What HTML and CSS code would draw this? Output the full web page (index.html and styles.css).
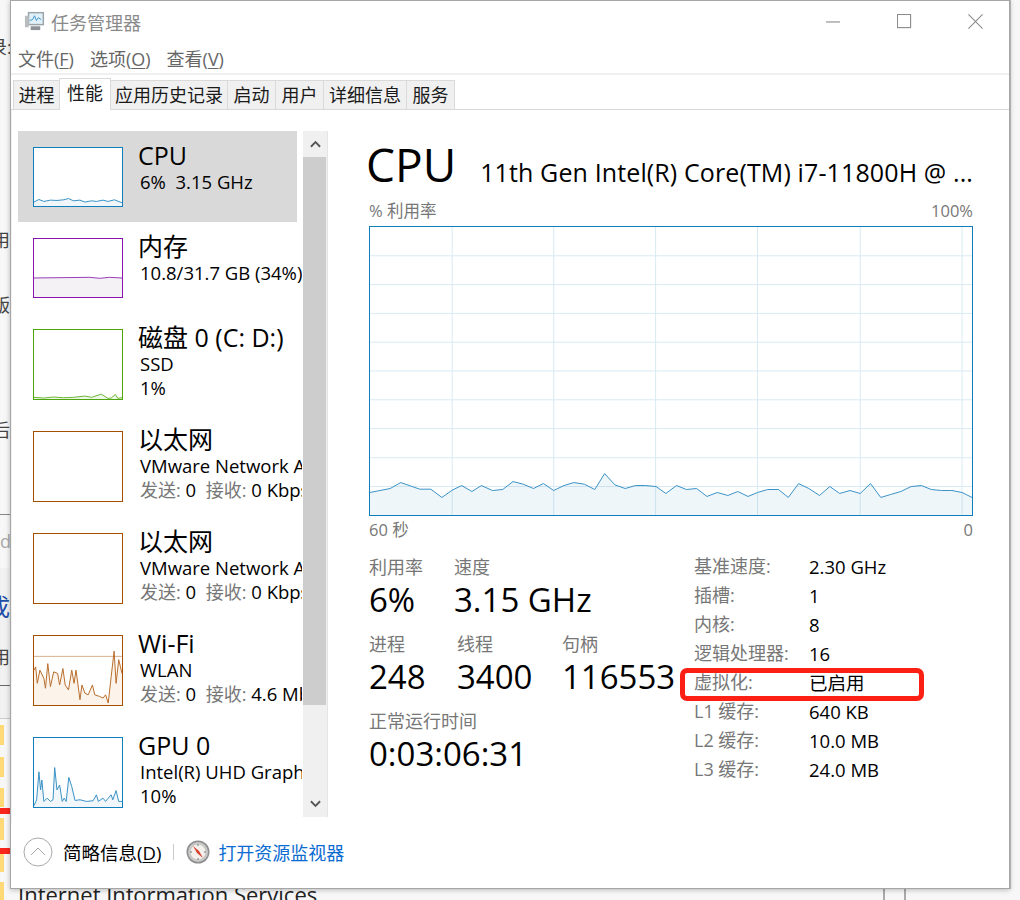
FILE: index.html
```html
<!DOCTYPE html>
<html lang="zh-CN">
<head>
<meta charset="utf-8">
<title>任务管理器</title>
<link rel="stylesheet" href="styles.css">
</head>
<body>
<div class="desktop">
  <span class="bg-frag frag-a">录:</span>
  <span class="bg-frag frag-b">用</span>
  <span class="bg-frag frag-c">版</span>
  <span class="bg-frag frag-d">后</span>
  <span class="bg-rule rule-a"></span>
  <span class="bg-frag frag-e">do</span>
  <span class="bg-band"></span>
  <span class="bg-frag frag-f">成</span>
  <span class="bg-frag frag-g">用</span>
  <span class="bg-rule rule-b"></span>
  <span class="bg-rule rule-c"></span>
  <span class="folder f1"></span><span class="folder f2"></span><span class="folder f3"></span>
  <span class="folder f4"></span><span class="folder f5"></span><span class="folder f6"></span>
  <span class="red-bar r1"></span><span class="red-bar r2"></span>
  <span class="bg-under">Internet Information Services</span>
  <span class="bg-vline v1"></span><span class="bg-vline v2"></span>

  <div class="window">
    <header class="titlebar">
      <svg class="app-icon" viewBox="0 0 22 22" aria-hidden="true">
        <rect x="4" y="1" width="17" height="14" fill="#9aa3a8"/>
        <rect x="5.500" y="2.500" width="14" height="11" fill="#dff0f8"/>
        <path d="M6 10l3-1 2-4 2 5 2-3 3 2" fill="none" stroke="#3d93c9" stroke-width="1"/>
        <rect x="1" y="5" width="4" height="12" fill="#b9bdc0"/>
        <rect x="7" y="16" width="10" height="4" fill="#8c9296"/>
      </svg>
      <span class="app-title">任务管理器</span>
      <div class="win-buttons">
        <svg class="win-btn" viewBox="0 0 16 16" aria-hidden="true"><path d="M0 8.500h15"/></svg>
        <svg class="win-btn" viewBox="0 0 16 16" aria-hidden="true"><rect x=".5" y=".5" width="14" height="14"/></svg>
        <svg class="win-btn" viewBox="0 0 16 16" aria-hidden="true"><path d="M.5.5l15 15M15.500.5l-15 15"/></svg>
      </div>
    </header>
    <nav class="menubar">
      <span>文件(<u>F</u>)</span><span>选项(<u>O</u>)</span><span>查看(<u>V</u>)</span>
    </nav>
    <div class="tabs">
      <span class="tab t-proc">进程</span>
      <span class="tab tab-on">性能</span>
      <span class="tab t-hist">应用历史记录</span>
      <span class="tab t-start">启动</span>
      <span class="tab t-user">用户</span>
      <span class="tab t-det">详细信息</span>
      <span class="tab t-svc">服务</span>
    </div>
    <div class="content">
      <aside class="sidebar">
        <div class="list">
          <div class="item item-s item-on">
            <svg class="thumb thumb-s cpu" viewBox="100 442 268 178" preserveAspectRatio="none" aria-hidden="true">
              <path class="fill" d="M100 608L115 600 130 606 150 602 170 603 190 601 205 597 220 604 240 602 255 608 275 604 290 606 310 602 325 606 345 601 368 610V620H100Z"/>
              <path class="line" d="M100 608L115 600 130 606 150 602 170 603 190 601 205 597 220 604 240 602 255 608 275 604 290 606 310 602 325 606 345 601 368 610"/>
            </svg>
            <div class="info"><div class="name">CPU</div><div class="sub">6%&nbsp; 3.15 GHz</div></div>
          </div>
          <div class="item item-s">
            <svg class="thumb thumb-s mem" viewBox="100 55 268 177" preserveAspectRatio="none" aria-hidden="true">
              <path class="fill" d="M100 174L270 172 300 175 330 172 368 174V232H100Z"/>
              <path class="line" d="M100 174L270 172 300 175 330 172 368 174"/>
            </svg>
            <div class="info"><div class="name">内存</div><div class="sub">10.8/31.7 GB (34%)</div></div>
          </div>
          <div class="item">
            <svg class="thumb disk" viewBox="100 327 268 211" preserveAspectRatio="none" aria-hidden="true">
              <path class="fill" d="M100 533L130 535 160 532 190 534 220 533 255 529 275 533 305 523 325 536 335 535 348 524 355 536 368 534V538H100Z"/>
              <path class="line" d="M100 533L130 535 160 532 190 534 220 533 255 529 275 533 305 523 325 536 335 535 348 524 355 536 368 534"/>
            </svg>
            <div class="info"><div class="name">磁盘 0 (C: D:)</div><div class="sub">SSD</div><div class="sub">1%</div></div>
          </div>
          <div class="item">
            <svg class="thumb net" viewBox="0 0 90 71" aria-hidden="true"></svg>
            <div class="info"><div class="name">以太网</div><div class="sub">VMware Network Adapter</div><div class="sub"><span class="dim">发送:</span> 0&nbsp; <span class="dim">接收:</span> 0 Kbps</div></div>
          </div>
          <div class="item">
            <svg class="thumb net" viewBox="0 0 90 71" aria-hidden="true"></svg>
            <div class="info"><div class="name">以太网</div><div class="sub">VMware Network Adapter</div><div class="sub"><span class="dim">发送:</span> 0&nbsp; <span class="dim">接收:</span> 0 Kbps</div></div>
          </div>
          <div class="item">
            <svg class="thumb net" viewBox="100 46 268 210" preserveAspectRatio="none" aria-hidden="true">
              <path class="fill" d="M100 150L105 140 110 190 118 150 130 175 135 205 142 130 150 200 160 155 172 160 178 195 188 145 195 195 205 210 215 150 222 190 228 150 240 240 246 195 255 220 265 225 278 195 285 225 300 230 310 235 318 225 326 250 335 170 344 92 350 190 358 118 368 160V256H100Z"/>
              <path class="limit" d="M100 108H368"/>
              <path class="line" d="M100 150L105 140 110 190 118 150 130 175 135 205 142 130 150 200 160 155 172 160 178 195 188 145 195 195 205 210 215 150 222 190 228 150 240 240 246 195 255 220 265 225 278 195 285 225 300 230 310 235 318 225 326 250 335 170 344 92 350 190 358 118 368 160"/>
            </svg>
            <div class="info"><div class="name">Wi-Fi</div><div class="sub">WLAN</div><div class="sub"><span class="dim">发送:</span> 0&nbsp; <span class="dim">接收:</span> 4.6 Mbps</div></div>
          </div>
          <div class="item">
            <svg class="thumb cpu" viewBox="100 352 268 210" preserveAspectRatio="none" aria-hidden="true">
              <path class="fill" d="M100 558L108 540 115 455 120 510 124 480 130 545 140 535 150 545 158 540 163 442 170 510 178 495 186 545 192 535 198 545 206 472 215 500 225 542 240 540 260 545 280 543 290 525 296 545 310 535 318 545 326 535 335 525 340 540 350 512 358 545 368 545V562H100Z"/>
              <path class="line" d="M100 558L108 540 115 455 120 510 124 480 130 545 140 535 150 545 158 540 163 442 170 510 178 495 186 545 192 535 198 545 206 472 215 500 225 542 240 540 260 545 280 543 290 525 296 545 310 535 318 545 326 535 335 525 340 540 350 512 358 545 368 545"/>
            </svg>
            <div class="info"><div class="name">GPU 0</div><div class="sub">Intel(R) UHD Graphics</div><div class="sub">10%</div></div>
          </div>
        </div>
        <div class="scrollbar">
          <div class="sb-btn"><svg viewBox="0 0 12 8" aria-hidden="true"><path d="M1 7l5-5 5 5"/></svg></div>
          <div class="sb-thumb"></div>
          <div class="sb-track"></div>
          <div class="sb-btn"><svg viewBox="0 0 12 8" aria-hidden="true"><path d="M1 1l5 5 5-5"/></svg></div>
        </div>
      </aside>
      <main class="main">
        <div class="head">
          <h1 class="big">CPU</h1>
          <div class="model">11th Gen Intel(R) Core(TM) i7-11800H @ ...</div>
        </div>
        <div class="axis axis-top"><span>% 利用率</span><span>100%</span></div>
        <svg class="chart" viewBox="24 -642 1524 870" preserveAspectRatio="none" aria-hidden="true">
          <path class="grid" d="M232 -642V228M489 -642V228M747 -642V228M1005 -642V228M1265 -642V228M1523 -642V228M24 -555H1548M24 -468H1548M24 -381H1548M24 -294H1548M24 -207H1548M24 -120H1548M24 -33H1548M24 55H1548M24 142H1548"/>
          <path class="area" d="M24 160L75 148 102 130 150 150 178 150 206 175 232 153 256 139 282 157 306 139 334 154 360 151 386 127 412 135 438 148 463 133 489 154 515 139 540 130 567 135 593 151 618 103 644 137 670 148 696 139 722 139 748 142 773 163 800 139 825 151 851 148 877 172 903 160 930 169 955 157 981 172 1005 160 1031 151 1058 151 1083 175 1109 133 1135 148 1162 169 1188 142 1213 163 1239 154 1265 163 1291 133 1317 175 1342 166 1368 157 1394 142 1420 139 1445 151 1471 154 1497 154 1523 160 1548 175V228H24Z"/>
          <path class="trace" d="M24 160L75 148 102 130 150 150 178 150 206 175 232 153 256 139 282 157 306 139 334 154 360 151 386 127 412 135 438 148 463 133 489 154 515 139 540 130 567 135 593 151 618 103 644 137 670 148 696 139 722 139 748 142 773 163 800 139 825 151 851 148 877 172 903 160 930 169 955 157 981 172 1005 160 1031 151 1058 151 1083 175 1109 133 1135 148 1162 169 1188 142 1213 163 1239 154 1265 163 1291 133 1317 175 1342 166 1368 157 1394 142 1420 139 1445 151 1471 154 1497 154 1523 160 1548 175"/>
        </svg>
        <div class="axis axis-bottom"><span>60 秒</span><span>0</span></div>
        <div class="stats">
          <div class="live">
            <div class="live-row">
              <div class="stat s-usage"><div class="stat-label">利用率</div><div class="stat-value">6%</div></div>
              <div class="stat"><div class="stat-label">速度</div><div class="stat-value">3.15 GHz</div></div>
            </div>
            <div class="live-row">
              <div class="stat s-proc"><div class="stat-label">进程</div><div class="stat-value">248</div></div>
              <div class="stat s-thr"><div class="stat-label">线程</div><div class="stat-value">3400</div></div>
              <div class="stat"><div class="stat-label">句柄</div><div class="stat-value">116553</div></div>
            </div>
            <div class="live-row">
              <div class="stat"><div class="stat-label">正常运行时间</div><div class="stat-value">0:03:06:31</div></div>
            </div>
          </div>
          <dl class="specs">
            <div class="spec"><dt>基准速度:</dt><dd>2.30 GHz</dd></div>
            <div class="spec"><dt>插槽:</dt><dd>1</dd></div>
            <div class="spec"><dt>内核:</dt><dd>8</dd></div>
            <div class="spec"><dt>逻辑处理器:</dt><dd>16</dd></div>
            <div class="spec"><dt>虚拟化:</dt><dd>已启用</dd></div>
            <div class="spec"><dt>L1 缓存:</dt><dd>640 KB</dd></div>
            <div class="spec"><dt>L2 缓存:</dt><dd>10.0 MB</dd></div>
            <div class="spec"><dt>L3 缓存:</dt><dd>24.0 MB</dd></div>
          </dl>
        </div>
      </main>
    </div>
    <footer class="footer">
      <svg class="collapse" viewBox="0 0 30 30" aria-hidden="true"><circle cx="15" cy="15" r="14"/><path d="M8 18l7-7 7 7"/></svg>
      <span class="fewer">简略信息(<u>D</u>)</span>
      <span class="sep"></span>
      <svg class="gauge" viewBox="0 0 24 24" aria-hidden="true">
        <circle cx="12" cy="12" r="11.500" fill="#8e8e8e"/>
        <circle cx="12" cy="12" r="10" fill="#c9c9c9"/>
        <circle cx="12" cy="12" r="7.500" fill="#f4f1ec"/>
        <path d="M7 6l6 5 4 7-6-5z" fill="#d8402c"/>
        <path d="M12 4v2M12 18v2M4 12h2M18 12h2" stroke="#777" stroke-width="1"/>
      </svg>
      <span class="monitor-link">打开资源监视器</span>
    </footer>
  </div>
  <div class="mark-box"></div>
</div>
</body>
</html>
```
FILE: styles.css
```css
* { box-sizing: border-box; }
html, body { margin: 0; padding: 0; height: 100%; }
body {
  background: #fff;
  overflow: hidden;
  font-family: "Open Sans", "Noto Sans CJK SC", sans-serif;
  color: #000;
}
u { text-underline-offset: 2px; }

/* desktop: a free canvas behind the window */
.desktop { position: relative; width: 1020px; height: 900px; overflow: hidden; background: #f7f7f7; }
.bg-frag { position: absolute; left: 0; width: 10px; overflow: hidden; white-space: nowrap; font-size: 18px; line-height: 24px; color: #444; }
.frag-a { top: 35px; left: -11px; width: 21px; }
.frag-b { top: 228px; left: -8px; width: 18px; }
.frag-c { top: 293px; left: -8px; width: 18px; }
.frag-d { top: 418px; left: -8px; width: 18px; }
.frag-e { top: 529px; color: #aaa; }
.frag-f { top: 592px; left: -14px; width: 24px; font-size: 24px; line-height: 30px; color: #1f4fa8; }
.frag-g { top: 645px; left: -8px; width: 18px; }
.bg-rule { position: absolute; left: 0; width: 10px; height: 1px; background: #666; }
.rule-a { top: 514px; background: #888; }
.rule-b { top: 685px; }
.rule-c { top: 718px; background: #ccc; }
.bg-band { position: absolute; left: 0; top: 568px; width: 10px; height: 150px; background: #f1f1f1; }
.folder { position: absolute; left: 0; width: 4px; background: #ffd976; }
.f1 { top: 725px; height: 20px; }
.f2 { top: 757px; height: 20px; }
.f3 { top: 788px; height: 19px; }
.f4 { top: 818px; height: 22px; }
.f5 { top: 853px; height: 19px; }
.f6 { top: 882px; height: 18px; }
.red-bar { position: absolute; left: 0; width: 10px; height: 6px; background: #f9261c; }
.r1 { top: 808px; }
.r2 { top: 848px; }
.bg-under { position: absolute; left: 18px; top: 880px; font-size: 22px; line-height: 28px; white-space: nowrap; color: #222; }
.bg-vline { position: absolute; top: 889px; width: 2px; height: 11px; background: #aaa; }
.v1 { left: 883px; }
.v2 { left: 904px; }

/* the task manager window */
.window {
  position: absolute;
  left: 10px;
  top: 0;
  width: 1000px;
  height: 889px;
  display: flex;
  flex-direction: column;
  background: #fff;
  border: 1px solid #a6a6a6;
  box-shadow: 1px 0 0 #b0b0b0, 0 1px 5px rgba(0, 0, 0, .25);
}
.titlebar { flex: none; height: 37px; display: flex; align-items: center; padding: 4px 0 0 13px; }
.app-icon { width: 21px; height: 21px; flex: none; }
.app-title { margin-left: 6px; font-size: 18px; color: #8a8a8a; }
.win-buttons { margin-left: auto; margin-right: 26px; display: flex; gap: 56px; }
.win-btn { width: 15px; height: 15px; fill: none; stroke: #8c8c8c; stroke-width: 1.2; display: block; }
.menubar { flex: none; height: 37px; display: flex; align-items: center; gap: 16px; padding: 4px 0 0 7px; font-size: 18px; color: #666; border-bottom: 2px solid #f0f0f0; }
.tabs { flex: none; height: 35px; display: flex; align-items: flex-end; padding-left: 2px; border-bottom: 1px solid #d9d9d9; }
.tab { height: 29px; margin-left: -1px; text-align: center; font-size: 18px; line-height: 29px; color: #1a1a1a; background: #f0f0f0; border: 1px solid #dadada; border-bottom: 0; }
.t-proc { width: 47px; margin-left: 0; }
.tab-on { width: 52px; height: 32px; margin-bottom: -1px; line-height: 28px; background: #fff; position: relative; }
.t-hist { width: 118px; }
.t-start { width: 49px; }
.t-user { width: 49px; }
.t-det { width: 84px; }
.t-svc { width: 49px; }

.content { flex: 1; min-height: 0; display: flex; padding: 21px 0 0 6px; border-left: 1px solid #f2f2f2; }
.sidebar { flex: none; width: 311px; height: 686px; display: flex; }
.list { flex: none; width: 285px; height: 686px; overflow: hidden; }
.item { width: 279px; height: 102px; display: flex; gap: 15px; padding-left: 15px; }
.item-s { height: 91px; }
.item-on { background: #d9d9d9; }
.thumb { flex: none; display: block; width: 90px; height: 71px; margin-top: 16px; border: 1px solid; background: #fff; overflow: hidden; }
.thumb-s { height: 60px; }
.fill { stroke: none; }
.line, .limit { fill: none; stroke-width: 1; vector-effect: non-scaling-stroke; }
.cpu { border-color: #117dbb; }
.cpu .line { stroke: #3a92c6; }
.cpu .fill { fill: #f1f6fa; }
.mem { border-color: #8b12ae; }
.mem .line { stroke: #9a3cba; }
.mem .fill { fill: #f4f2f4; }
.disk { border-color: #4da60c; }
.disk .line { stroke: #6bb637; }
.disk .fill { fill: #eff7e9; }
.net { border-color: #a74f01; }
.net .line { stroke: #b96f2d; }
.net .fill { fill: #fcf3eb; }
.net .limit { stroke: #d8b08d; }
.info { flex: none; width: 164px; padding-top: 9px; overflow: hidden; white-space: nowrap; }
.name { font-size: 25px; line-height: 30px; }
.sub { margin-left: 2px; font-size: 18.5px; line-height: 24px; }
.dim { color: #777; font-size: 18px; }

.scrollbar { flex: none; width: 25px; height: 686px; display: flex; flex-direction: column; background: #f0f0f0; border-right: 1px solid #e4e4e4; }
.sb-btn { flex: none; height: 26px; display: flex; align-items: center; justify-content: center; }
.sb-btn svg { width: 11px; height: 8px; fill: none; stroke: #555; stroke-width: 2; }
.sb-thumb { flex: none; height: 548px; background: #cdcdcd; margin-right: 1px; }
.sb-track { flex: 1; }

.main { flex: 1; min-width: 0; padding: 0 36px 0 40px; }
.head { height: 68px; display: flex; align-items: baseline; gap: 24px; margin-top: 2px; }
.big { margin: 0 0 0 -3px; font-size: 46px; line-height: 62px; font-weight: 400; }
.model { font-size: 25px; line-height: 32px; white-space: nowrap; letter-spacing: .12px; }
.axis { display: flex; justify-content: space-between; font-size: 16.5px; line-height: 20px; color: #777; }
.axis-top { height: 20px; margin-bottom: 5px; }
.axis-bottom { margin-top: 4px; height: 22px; }
.chart { display: block; width: 604px; height: 290px; border: 1px solid #117dbb; background: #fff; }
.grid { fill: none; stroke: #d9eaf4; stroke-width: 1; vector-effect: non-scaling-stroke; }
.area { fill: #117dbb; fill-opacity: .07; stroke: none; }
.trace { fill: none; stroke: #3a92c6; stroke-width: 1; vector-effect: non-scaling-stroke; }

.stats { display: flex; margin-top: 13px; }
.live { flex: none; width: 325px; }
.live-row { display: flex; height: 77px; }
.s-usage { width: 85px; }
.s-proc { width: 88px; }
.s-thr { width: 105px; }
.stat-label { font-size: 18px; line-height: 24px; color: #777; }
.stat-value { font-size: 33px; line-height: 42px; white-space: nowrap; }
.specs { margin: -3px 0 0; flex: 1; }
.spec { display: flex; height: 29px; align-items: center; line-height: 29px; }
.spec dt { width: 115px; font-size: 18px; color: #777; }
.spec dd { margin: 0; font-size: 18.5px; }

.footer { flex: none; height: 65px; display: flex; align-items: center; padding: 0 0 7px 12px; }
.collapse { width: 30px; height: 30px; fill: none; stroke: #aaa; stroke-width: 1; }
.fewer { margin-left: 10px; font-size: 18.5px; }
.sep { width: 1px; height: 16px; margin: 0 12px; background: #ccc; }
.gauge { width: 24px; height: 24px; }
.monitor-link { margin-left: 8px; font-size: 18px; color: #0a6bd1; }

.mark-box { position: absolute; left: 680px; top: 668px; width: 244px; height: 33px; border: 5px solid #fb1f14; border-radius: 7px; }
```
